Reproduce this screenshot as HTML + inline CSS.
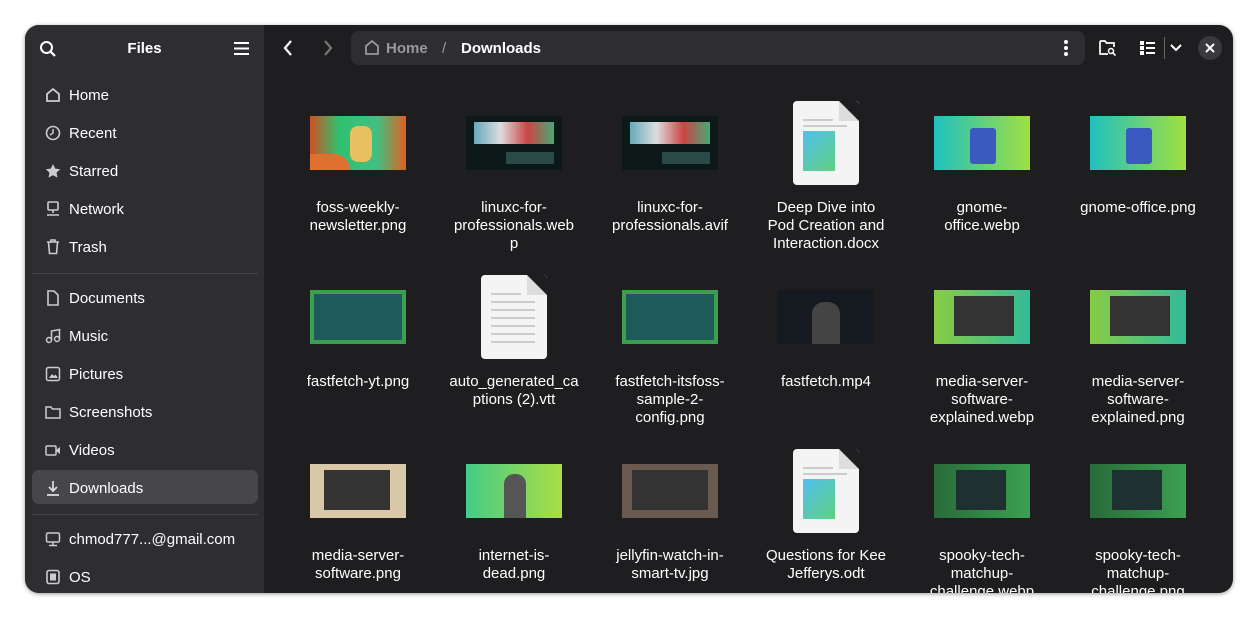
<!DOCTYPE html><html><head><style>
body{margin:0;width:1259px;height:619px;background:#fff;font-family:"Liberation Sans",sans-serif;overflow:hidden;position:relative}
.win{position:absolute;left:25px;top:25px;width:1208px;height:568px;border-radius:14px;overflow:hidden;background:#1e1e20;box-shadow:0 1px 4px rgba(0,0,0,.4)}
.side{position:absolute;left:0;top:0;width:239px;height:100%;background:#2e2e32;color:#fff}
.side .it{position:absolute;left:7px;width:226px;height:34px;border-radius:7px;font-size:15px;line-height:34px}
.side .it span{position:absolute;left:37px;top:2px}
.side .it svg{position:absolute;left:13px;top:10px}
.sep{position:absolute;left:7px;width:226px;height:1px;background:#444448}
.cell{position:absolute;width:150px;text-align:center;color:#fff;font-size:15px;line-height:18px;margin-top:2px}
.th{position:absolute;width:96px;height:54px}
.doc{position:absolute;width:66px;height:84px;background:#f4f4f4;border-radius:4px;overflow:hidden}
.doc:before{content:"";position:absolute;right:0;top:0;border-style:solid;border-width:0 20px 20px 0;border-color:#1e1e20 #1e1e20 #ddd #ddd}
.ln{position:absolute;left:10px;width:44px;height:2px;background:#ccc}
</style></head><body>
<div class="win">
<div class="side">
<svg style="position:absolute;left:14px;top:15px" width="18" height="18" viewBox="0 0 18 18"><circle cx="7.5" cy="7.5" r="5.5" fill="none" stroke="#fff" stroke-width="2"/><path d="M11.5 11.5l4.5 4.5" stroke="#fff" stroke-width="2.2"/></svg>
<div style="position:absolute;left:0;width:239px;top:15px;text-align:center;font-weight:bold;font-size:15px;line-height:18px">Files</div>
<svg style="position:absolute;left:209px;top:17px" width="15" height="13"><path d="M0 1h15M0 6.5h15M0 12h15" stroke="#fff" stroke-width="2"/></svg>
<div class="it" style="top:52px"><svg width="16" height="16"><path d="M2 7l6-5 6 5v7H2z" fill="none" stroke="#ccc" stroke-width="1.8"/></svg><span>Home</span></div>
<div class="it" style="top:90px"><svg width="16" height="16"><circle cx="8" cy="8" r="6.5" fill="none" stroke="#ccc" stroke-width="1.6"/><path d="M8 4v4l-3 2" fill="none" stroke="#ccc" stroke-width="1.5"/></svg><span>Recent</span></div>
<div class="it" style="top:128px"><svg width="16" height="16"><path d="M8 1l2.2 4.6 5 .6-3.7 3.4 1 5L8 12.2 3.5 14.6l1-5L.8 6.2l5-.6z" fill="#ccc"/></svg><span>Starred</span></div>
<div class="it" style="top:166px"><svg width="16" height="16"><rect x="3" y="1" width="10" height="8" rx="1" fill="none" stroke="#ccc" stroke-width="1.6"/><path d="M8 9v3M2 14h12" stroke="#ccc" stroke-width="1.6"/></svg><span>Network</span></div>
<div class="it" style="top:204px"><svg width="16" height="16"><path d="M2 3h12M6 3V1h4v2M3.5 3.5l1 11h7l1-11" fill="none" stroke="#ccc" stroke-width="1.6"/></svg><span>Trash</span></div>
<div class="sep" style="top:248px"></div>
<div class="it" style="top:255px"><svg width="16" height="16"><path d="M3 1h6l4 4v10H3z" fill="none" stroke="#ccc" stroke-width="1.6"/></svg><span>Documents</span></div>
<div class="it" style="top:293px"><svg width="16" height="16"><circle cx="4" cy="12" r="2.5" fill="none" stroke="#ccc" stroke-width="1.5"/><circle cx="12" cy="11" r="2.5" fill="none" stroke="#ccc" stroke-width="1.5"/><path d="M6.5 12V3l8-1.5v9" fill="none" stroke="#ccc" stroke-width="1.5"/></svg><span>Music</span></div>
<div class="it" style="top:331px"><svg width="16" height="16"><rect x="1.5" y="1.5" width="13" height="13" rx="2" fill="none" stroke="#ccc" stroke-width="1.5"/><path d="M4 12l3-4 2 2 1.5-1.5L13 12z" fill="#ccc"/></svg><span>Pictures</span></div>
<div class="it" style="top:369px"><svg width="16" height="16"><path d="M1 3h5l1.5 2H15v9H1z" fill="none" stroke="#ccc" stroke-width="1.5"/></svg><span>Screenshots</span></div>
<div class="it" style="top:407px"><svg width="16" height="16"><rect x="1" y="4" width="10" height="9" rx="1" fill="none" stroke="#ccc" stroke-width="1.5"/><path d="M11 8l4-3v7l-4-3z" fill="#ccc"/></svg><span>Videos</span></div>
<div class="it" style="top:445px;background:#46464b"><svg width="16" height="16"><path d="M8 1v10M4 7l4 4 4-4M2 15h12" fill="none" stroke="#ddd" stroke-width="1.7"/></svg><span>Downloads</span></div>
<div class="sep" style="top:489px"></div>
<div class="it" style="top:496px"><svg width="16" height="16"><rect x="1.5" y="2" width="13" height="9" rx="1.5" fill="none" stroke="#ccc" stroke-width="1.5"/><path d="M8 11v3M4 14.5h8" stroke="#ccc" stroke-width="1.5"/></svg><span>chmod777...@gmail.com</span></div>
<div class="it" style="top:534px"><svg width="16" height="16"><rect x="2" y="1.5" width="12" height="13" rx="2" fill="none" stroke="#ccc" stroke-width="1.6"/><rect x="5" y="4.5" width="6" height="7" fill="#ccc"/></svg><span>OS</span></div>
</div>
<svg style="position:absolute;left:257px;top:14px" width="12" height="18"><path d="M9 2L3 9l6 7" fill="none" stroke="#fff" stroke-width="2.2"/></svg>
<svg style="position:absolute;left:297px;top:14px" width="12" height="18"><path d="M3 2l6 7-6 7" fill="none" stroke="#777" stroke-width="2.2"/></svg>
<div style="position:absolute;left:326px;top:6px;width:734px;height:34px;border-radius:8px;background:#2e2e32"></div>
<svg style="position:absolute;left:339px;top:14px" width="16" height="17"><path d="M2 7l6-5 6 5v8H2z" fill="none" stroke="#999" stroke-width="1.8"/></svg>
<div style="position:absolute;left:361px;top:15px;font-size:15px;font-weight:bold;color:#999;line-height:18px">Home</div>
<div style="position:absolute;left:417px;top:15px;font-size:15px;color:#999;line-height:18px">/</div>
<div style="position:absolute;left:436px;top:15px;font-size:15px;font-weight:bold;color:#fff;line-height:18px">Downloads</div>
<svg style="position:absolute;left:1038px;top:14px" width="6" height="18"><circle cx="3" cy="3" r="2" fill="#fff"/><circle cx="3" cy="9" r="2" fill="#fff"/><circle cx="3" cy="15" r="2" fill="#fff"/></svg>
<svg style="position:absolute;left:1074px;top:14px" width="18" height="17"><path d="M1 2h5l1.5 2H15v4M1 2v13h8" fill="none" stroke="#fff" stroke-width="1.7"/><circle cx="12" cy="12" r="2.5" fill="none" stroke="#fff" stroke-width="1.5"/><path d="M14 14l2.5 2.5" stroke="#fff" stroke-width="1.7"/></svg>
<svg style="position:absolute;left:1115px;top:16px" width="15" height="14"><rect x="0" y="0" width="4" height="4" fill="#fff"/><rect x="0" y="5" width="4" height="4" fill="#fff"/><rect x="0" y="10" width="4" height="4" fill="#fff"/><path d="M6 2h9M6 7h9M6 12h9" stroke="#fff" stroke-width="2"/></svg>
<div style="position:absolute;left:1139px;top:12px;width:1px;height:22px;background:#666"></div>
<svg style="position:absolute;left:1145px;top:19px" width="12" height="8"><path d="M1 1l5 5 5-5" fill="none" stroke="#fff" stroke-width="2"/></svg>
<div style="position:absolute;left:1173px;top:11px;width:24px;height:24px;border-radius:50%;background:#3a3a3e"></div>
<svg style="position:absolute;left:1180px;top:18px" width="10" height="10"><path d="M1 1l8 8M9 1l-8 8" stroke="#fff" stroke-width="2"/></svg>

<div class="th" style="left:285px;top:91px;background:linear-gradient(90deg,#d05020 0%,#30c070 30%,#40c080 70%,#e06020 100%)"><div style="position:absolute;left:40px;top:10px;width:22px;height:36px;background:#e8c060;border-radius:8px"></div><div style="position:absolute;left:0;bottom:0;width:40px;height:16px;background:#e07030;border-radius:0 20px 0 0"></div></div>
<div class="cell" style="left:258px;top:172px">foss-weekly-<br>newsletter.png</div>
<div class="th" style="left:441px;top:91px;background:#0d1818"><div style="position:absolute;left:8px;top:6px;width:80px;height:22px;background:linear-gradient(90deg,#6ab,#ddd,#c44,#4a7)"></div><div style="position:absolute;left:40px;top:36px;width:48px;height:12px;background:#2a4a48"></div></div>
<div class="cell" style="left:414px;top:172px">linuxc-for-<br>professionals.web<br>p</div>
<div class="th" style="left:597px;top:91px;background:#0d1818"><div style="position:absolute;left:8px;top:6px;width:80px;height:22px;background:linear-gradient(90deg,#6ab,#ddd,#c44,#4a7)"></div><div style="position:absolute;left:40px;top:36px;width:48px;height:12px;background:#2a4a48"></div></div>
<div class="cell" style="left:570px;top:172px">linuxc-for-<br>professionals.avif</div>
<div class="doc" style="left:768px;top:76px"><div class="ln" style="top:18px;width:30px"></div><div class="ln" style="top:24px"></div><div style="position:absolute;left:10px;top:30px;width:32px;height:40px;background:linear-gradient(135deg,#50c0f0,#60d080)"></div></div>
<div class="cell" style="left:726px;top:172px">Deep Dive into<br>Pod Creation and<br>Interaction.docx</div>
<div class="th" style="left:909px;top:91px;background:linear-gradient(90deg,#20c0c0,#a0e040)"><div style="position:absolute;left:36px;top:12px;width:26px;height:36px;background:#3a5ac0;border-radius:3px"></div></div>
<div class="cell" style="left:882px;top:172px">gnome-<br>office.webp</div>
<div class="th" style="left:1065px;top:91px;background:linear-gradient(90deg,#20c0c0,#a0e040)"><div style="position:absolute;left:36px;top:12px;width:26px;height:36px;background:#3a5ac0;border-radius:3px"></div></div>
<div class="cell" style="left:1038px;top:172px">gnome-office.png</div>

<div class="th" style="left:285px;top:265px;background:#3aa050"><div style="position:absolute;left:4px;top:4px;width:88px;height:46px;background:#1f5a5a"></div></div>
<div class="cell" style="left:258px;top:346px">fastfetch-yt.png</div>
<div class="doc" style="left:456px;top:250px"><div class="ln" style="top:18px;width:30px"></div><div class="ln" style="top:26px"></div><div class="ln" style="top:34px"></div><div class="ln" style="top:42px"></div><div class="ln" style="top:50px"></div><div class="ln" style="top:58px"></div><div class="ln" style="top:66px"></div></div>
<div class="cell" style="left:414px;top:346px">auto_generated_ca<br>ptions (2).vtt</div>
<div class="th" style="left:597px;top:265px;background:#3aa050"><div style="position:absolute;left:4px;top:4px;width:88px;height:46px;background:#1f5a5a"></div></div>
<div class="cell" style="left:570px;top:346px">fastfetch-itsfoss-<br>sample-2-<br>config.png</div>
<div class="th" style="left:753px;top:265px;background:#151a20"><div style="position:absolute;left:34px;top:12px;width:28px;height:42px;background:#444;border-radius:12px 12px 0 0"></div></div>
<div class="cell" style="left:726px;top:346px">fastfetch.mp4</div>
<div class="th" style="left:909px;top:265px;background:linear-gradient(90deg,#8c4,#3b9)"><div style="position:absolute;left:20px;top:6px;width:60px;height:40px;background:#333"></div></div>
<div class="cell" style="left:882px;top:346px">media-server-<br>software-<br>explained.webp</div>
<div class="th" style="left:1065px;top:265px;background:linear-gradient(90deg,#8c4,#3b9)"><div style="position:absolute;left:20px;top:6px;width:60px;height:40px;background:#333"></div></div>
<div class="cell" style="left:1038px;top:346px">media-server-<br>software-<br>explained.png</div>

<div class="th" style="left:285px;top:439px;background:#d8c8a8"><div style="position:absolute;left:14px;top:6px;width:66px;height:40px;background:#333"></div></div>
<div class="cell" style="left:258px;top:520px">media-server-<br>software.png</div>
<div class="th" style="left:441px;top:439px;background:linear-gradient(90deg,#4c8,#ad4)"><div style="position:absolute;left:38px;top:10px;width:22px;height:44px;background:#555;border-radius:10px 10px 0 0"></div></div>
<div class="cell" style="left:414px;top:520px">internet-is-<br>dead.png</div>
<div class="th" style="left:597px;top:439px;background:#6a5a50"><div style="position:absolute;left:10px;top:6px;width:76px;height:40px;background:#333"></div></div>
<div class="cell" style="left:570px;top:520px">jellyfin-watch-in-<br>smart-tv.jpg</div>
<div class="doc" style="left:768px;top:424px"><div class="ln" style="top:18px;width:30px"></div><div class="ln" style="top:24px"></div><div style="position:absolute;left:10px;top:30px;width:32px;height:40px;background:linear-gradient(135deg,#50c0f0,#60d080)"></div></div>
<div class="cell" style="left:726px;top:520px">Questions for Kee<br>Jefferys.odt</div>
<div class="th" style="left:909px;top:439px;background:linear-gradient(90deg,#2a6a3a,#3aa050)"><div style="position:absolute;left:22px;top:6px;width:50px;height:40px;background:#1e3030"></div></div>
<div class="cell" style="left:882px;top:520px">spooky-tech-<br>matchup-<br>challenge.webp</div>
<div class="th" style="left:1065px;top:439px;background:linear-gradient(90deg,#2a6a3a,#3aa050)"><div style="position:absolute;left:22px;top:6px;width:50px;height:40px;background:#1e3030"></div></div>
<div class="cell" style="left:1038px;top:520px">spooky-tech-<br>matchup-<br>challenge.png</div>
</div>
</body></html>
